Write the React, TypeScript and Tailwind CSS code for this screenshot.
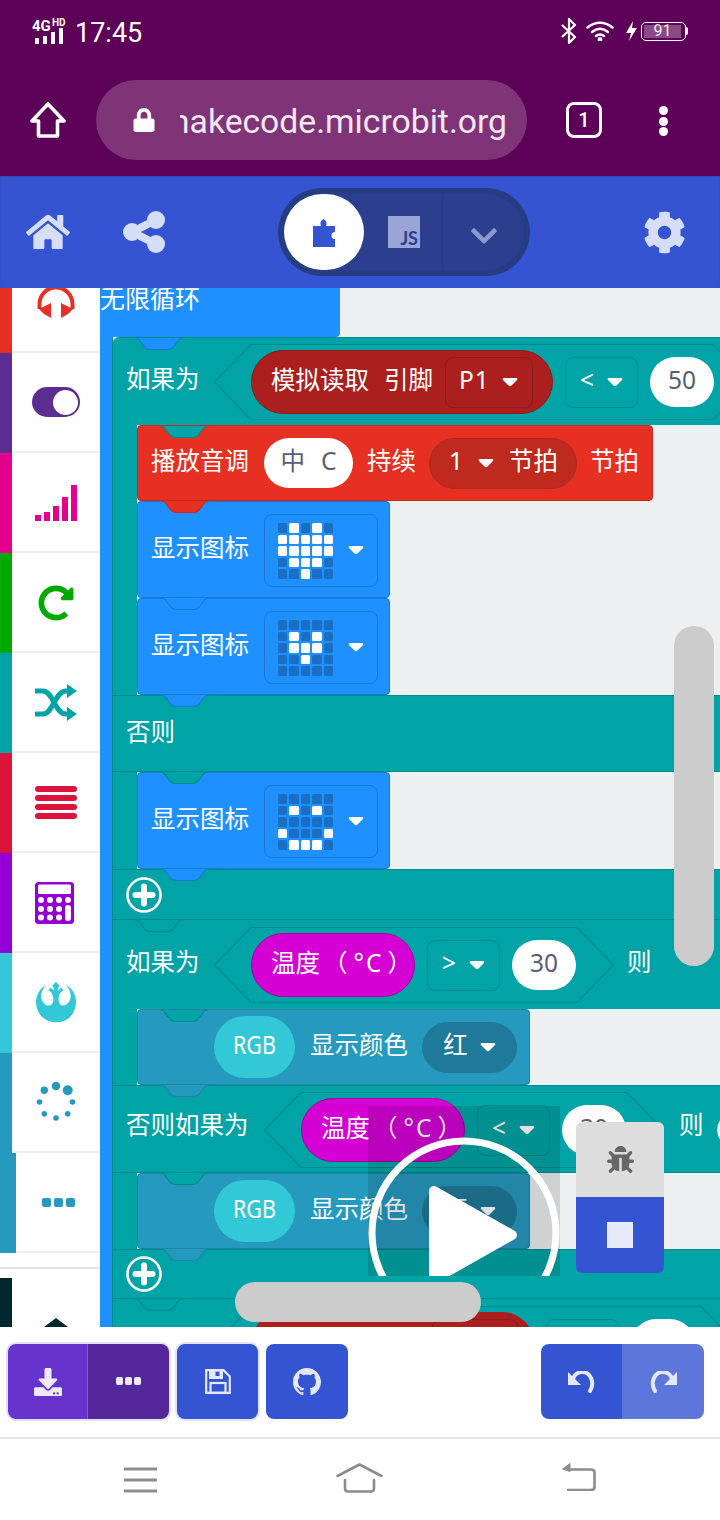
import type { ReactNode } from 'react';
import { FaBug, FaChevronDown, FaCog, FaDownload, FaHome, FaLock, FaRebel, FaRedoAlt } from 'react-icons/fa';
import { VscGithubInverted } from 'react-icons/vsc';

const FONT = '[font-family:"Noto_Sans","Noto_Sans_CJK_SC",sans-serif]';

function Bump({ fill, stroke }: { fill: string; stroke: string }) {
  return (
    <svg className="absolute left-[21px] top-full z-10" width="52" height="14" viewBox="0 0 52 14">
      <path d="M2 1 L3 1 Q5 1 6.5 3 L11 9 Q13.5 12.5 17 12.5 L35 12.5 Q38.5 12.5 41 9 L45.5 3 Q47 1 49 1 L50 1" fill={fill} stroke={stroke} strokeWidth="1.2" />
    </svg>
  );
}

// bump of a statement row, drawn over the first block inside it
function RowBump() {
  return (
    <div className="absolute left-[25px] top-full h-0 w-0">
      <Bump fill="#00a4a6" stroke="#008a8c" />
    </div>
  );
}

function Caret() {
  return (
    <svg width="16" height="10" viewBox="0 0 16 10" className="shrink-0">
      <path d="M2 1 L14 1 Q16 1 15 3 L9.5 8.5 Q8 10 6.5 8.5 L1 3 Q0 1 2 1 Z" fill="#fff" />
    </svg>
  );
}

function Hex({ width, children }: { width: number; children: ReactNode }) {
  const t = 37;
  const points = `${t},0.5 ${width - t},0.5 ${width - 0.5},38 ${width - t},75.5 ${t},75.5 0.5,38`;
  return (
    <div className="relative flex h-[76px] shrink-0 items-center pl-[37px]" style={{ width }}>
      <svg className="absolute inset-0" width={width} height="76">
        <polygon points={points} fill="#00a4a6" stroke="#008a8c" strokeWidth="1.2" />
      </svg>
      <div className="relative flex items-center">{children}</div>
    </div>
  );
}

function WhitePill({ children, width = 64 }: { children: ReactNode; width?: number }) {
  return (
    <div className="flex h-[50px] shrink-0 items-center justify-center rounded-full bg-white pb-[3px] text-[#575e75]" style={{ width }}>
      {children}
    </div>
  );
}

function CompareDrop({ label }: { label: string }) {
  return (
    <div className="mx-[12px] flex h-[51px] w-[73px] shrink-0 items-center justify-between rounded-lg border border-[#008a8c] px-[14px] text-white">
      <span className="-mt-[3px]">{label}</span>
      <Caret />
    </div>
  );
}

function TempPill() {
  return (
    <div className="flex h-[64px] w-[164px] shrink-0 items-center rounded-full border border-[#a3009e] bg-[#d400d4] pb-[3px] pl-[19px] text-white whitespace-pre">
      <span>温度</span>
      <span className="ml-[3px]">（</span>
      <span className="ml-[6px] tracking-[2px]">°C</span>
      <span className="ml-[4px]">）</span>
    </div>
  );
}

const LED_HEART = '.#.#.#####' + '#####.###...#..';
const LED_SMALL_HEART = '......#.#..###...#.......';
const LED_SMILE = '......#.#.....' + '.#...#.###.';

function ShowIcon({ leds }: { leds: string }) {
  return (
    <div className="relative flex h-[97px] w-[253px] items-center rounded border border-[#1a78d6] bg-[#1e90ff] pl-[13px] text-white">
      <span className="-mt-[2px] w-[113px]">显示图标</span>
      <div className="mt-[1px] flex h-[73px] w-[114px] items-center rounded-lg border border-[#1a78d6] pl-[13px]">
        <div className="mt-[2px] grid w-[55px] grid-cols-5 gap-[2px]">
          {leds.split('').map((c, i) => (
            <div key={i} className={c === '#' ? 'aspect-square rounded-[1.5px] bg-white' : 'aspect-square rounded-[1.5px] bg-[#1a6fc4]'} />
          ))}
        </div>
        <div className="ml-[15px]">
          <Caret />
        </div>
      </div>
      <Bump fill="#1e90ff" stroke="#1a78d6" />
    </div>
  );
}

function RgbBlock() {
  return (
    <div className="relative flex h-[76px] w-[393px] items-center rounded border border-[#1f84a6] bg-[#2699bf] pl-[76px] text-white">
      <div className="flex h-[62px] w-[81px] items-center justify-center rounded-full bg-[#33c8d6] pb-[3px]">
        <span className="scale-x-[0.88]">RGB</span>
      </div>
      <span className="-mt-[3px] ml-[15px] w-[112px]">显示颜色</span>
      <div className="flex h-[51px] w-[95px] items-center justify-center gap-[12px] rounded-full border border-[#1f7a99] bg-[#1f7a99]">
        <span className="-mt-[3px]">红</span>
        <Caret />
      </div>
      <Bump fill="#2699bf" stroke="#1f84a6" />
    </div>
  );
}

function PlusCircle() {
  return (
    <svg width="36" height="36" viewBox="0 0 36 36">
      <circle cx="18" cy="18" r="16.5" fill="none" stroke="#fff" strokeWidth="2.6" />
      <path d="M18 9.5 V26.5 M9.5 18 H26.5" stroke="#fff" strokeWidth="6" strokeLinecap="round" />
    </svg>
  );
}

function ToolItem({ strip, height = 'h-[100px]', wide, children }: { strip: string; height?: string; wide?: boolean; children: ReactNode }) {
  return (
    <div className={`flex ${height} w-full overflow-hidden`}>
      <div className={`${wide ? 'w-4' : 'w-3'} shrink-0 ${strip}`} />
      <div className={`flex flex-1 items-center border-b-2 border-[#eeeeee] bg-white ${wide ? 'pl-[26px]' : 'pl-[23px]'}`}>{children}</div>
    </div>
  );
}

function Toolbox() {
  const spinner = [
    [22, 6, 4.3],
    [33.7, 10.3, 5],
    [38.5, 22, 2.8],
    [33.7, 33.7, 2.8],
    [22, 38, 2.8],
    [10.3, 33.7, 2.8],
    [5.5, 22, 2.8],
    [10.3, 10.3, 3.7],
  ];
  return (
    <div className="flex w-[100px] shrink-0 flex-col bg-white">
      <ToolItem strip="bg-[#e63022]" height="h-[65px]">
        <svg width="38" height="33" viewBox="0 0 38 33" className="-mt-[36px] ml-[2px]">
          <path d="M2.5 24 V19 A16.5 16.5 0 0 1 35.5 19 V24" fill="none" stroke="#e63022" strokeWidth="4" />
          <path d="M2 24 L14 18 V33 L7 29 Z M36 24 L24 18 V33 L31 29 Z" fill="#e63022" />
        </svg>
      </ToolItem>
      <ToolItem strip="bg-[#5c2d91]">
        <div className="ml-[-3px] flex h-[30px] w-[48px] items-center justify-end rounded-full bg-[#5c2d91] pr-[2px]">
          <div className="h-[25px] w-[25px] rounded-full bg-white" />
        </div>
      </ToolItem>
      <ToolItem strip="bg-[#e3008c]">
        <svg width="42" height="36" viewBox="0 0 42 36" className="mt-[2px]">
          <path d="M0 30h6v6H0z M9 27h6v9H9z M18 21h6v15h-6z M27 12h6v24h-6z M36 0h6v36h-6z" fill="#e3008c" />
        </svg>
      </ToolItem>
      <ToolItem strip="bg-[#00a800]">
        <FaRedoAlt size={36} color="#00a800" className="ml-[3px] mt-[2px]" />
      </ToolItem>
      <ToolItem strip="bg-[#00a4a6]">
        <svg width="42" height="37" viewBox="0 0 42 37" fill="none" stroke="#00a4a6" strokeWidth="5">
          <path d="M0 7 H8 C18 7 20 30 31 30 H36" />
          <path d="M0 30 H8 C18 30 20 7 31 7 H36" />
          <path d="M32 0 L42 7 L32 14 Z M32 23 L42 30 L32 37 Z" fill="#00a4a6" stroke="none" />
        </svg>
      </ToolItem>
      <ToolItem strip="bg-[#dc143c]">
        <div className="flex w-[42px] flex-col gap-[3px]">
          <div className="h-[6px] rounded-sm bg-[#dc143c]" />
          <div className="h-[6px] rounded-sm bg-[#dc143c]" />
          <div className="h-[6px] rounded-sm bg-[#dc143c]" />
          <div className="h-[6px] rounded-sm bg-[#dc143c]" />
        </div>
      </ToolItem>
      <ToolItem strip="bg-[#9400d3]">
        <svg width="39" height="42" viewBox="0 0 39 42" className="mt-[2px]">
          <rect width="39" height="42" rx="3.5" fill="#9400d3" />
          <rect x="3" y="2.5" width="33" height="9.5" rx="1.5" fill="#fff" />
          {[6, 15, 24, 33].map((x) => (
            <circle key={x} cx={x} cy="18" r="3" fill="#fff" />
          ))}
          {[6, 15, 24].map((x) => (
            <circle key={x} cx={x} cy="27" r="3" fill="#fff" />
          ))}
          {[6, 15, 24].map((x) => (
            <circle key={x} cx={x} cy="35.5" r="3" fill="#fff" />
          ))}
          <rect x="30" y="23" width="6" height="16" rx="3" fill="#fff" />
        </svg>
      </ToolItem>
      <ToolItem strip="bg-[#33c8d6]">
        <FaRebel size={42} color="#33c8d6" />
      </ToolItem>
      <ToolItem strip="bg-[#2699bf]">
        <svg width="44" height="44" viewBox="0 0 44 44" className="-ml-[1px]">
          {spinner.map(([x, y, r]) => (
            <circle key={x * 10 + y} cx={x} cy={y} r={r} fill="#2699bf" />
          ))}
        </svg>
      </ToolItem>
      <ToolItem strip="bg-[#2699bf]" wide>
        <div className="flex gap-[3px]">
          <div className="h-[9px] w-[9px] rounded-[2px] bg-[#2699bf]" />
          <div className="h-[9px] w-[9px] rounded-[2px] bg-[#2699bf]" />
          <div className="h-[9px] w-[9px] rounded-[2px] bg-[#2699bf]" />
        </div>
      </ToolItem>
      <div className="mt-[14px] h-[2px] bg-[#e5e5e5]" />
      <div className="mt-[9px] flex h-[49px]">
        <div className="w-3 bg-[#00282d]" />
        <div className="relative flex-1 overflow-hidden">
          <svg className="absolute left-[32px] top-[40px]" width="24" height="9" viewBox="0 0 24 9">
            <path d="M12 0 L24 9 H0 Z" fill="#00282d" />
          </svg>
        </div>
      </div>
    </div>
  );
}

function Canvas() {
  return (
    <div className={`relative flex-1 overflow-hidden bg-[#ecf0f1] text-[24.5px] leading-none ${FONT}`}>
      <div className="h-[49px] w-[240px] rounded-br bg-[#1e90ff]">
        <div className="whitespace-nowrap text-[25px] leading-[20px] text-white">无限循环</div>
      </div>
      <div className="flex">
        <div className="w-3 shrink-0 bg-[#1e90ff]" />
        <div className="relative flex min-w-0 flex-1 flex-col text-white">
          <div className="absolute inset-y-0 left-0 z-10 w-px bg-[#008a8c]" />
          <div className="relative flex h-[88px] items-start rounded-tl-lg border-t border-[#008a8c] bg-[#00a4a6] pl-[14px] pt-[6px]">
            <span className="mt-[23px] w-[88px] shrink-0">如果为</span>
            <Hex width={536}>
              <div className="flex h-[64px] w-[302px] shrink-0 items-center rounded-full border border-[#8f1a1a] bg-[#ab1f1f] pl-[19px]">
                <span className="-mt-[3px]">模拟读取</span>
                <span className="-mt-[3px] ml-[15px] w-[61px] shrink-0">引脚</span>
                <div className="flex h-[51px] w-[88px] shrink-0 items-center justify-between rounded-lg border border-[#8f1a1a] pl-[13px] pr-[14px]">
                  <span className="-mt-[3px] tracking-[1px]">P1</span>
                  <Caret />
                </div>
              </div>
              <CompareDrop label="<" />
              <WhitePill>50</WhitePill>
            </Hex>
            <RowBump />
          </div>
          <div className="absolute left-0 top-0 h-0 w-0">
            <Bump fill="#1e90ff" stroke="#1a78d6" />
          </div>
          <div className="flex">
            <div className="w-[25px] shrink-0 bg-[#00a4a6]" />
            <div className="flex flex-col">
              <div className="relative flex h-[76px] w-[516px] items-center rounded border border-[#c9281c] bg-[#e63022] pl-[13px]">
                <span className="-mt-[3px] w-[113px] shrink-0">播放音调</span>
                <WhitePill width={89}>
                  <span>中</span>
                  <span className="ml-[16px]">C</span>
                </WhitePill>
                <span className="-mt-[3px] ml-[14px] w-[62px] shrink-0">持续</span>
                <div className="flex h-[51px] w-[148px] shrink-0 items-center rounded-full border border-[#b3271c] bg-[#bf2a1e] pl-[19px]">
                  <span className="-mt-[3px] w-[29px]">1</span>
                  <Caret />
                  <span className="-mt-[3px] ml-[15px]">节拍</span>
                </div>
                <span className="-mt-[3px] ml-[13px]">节拍</span>
                <Bump fill="#e63022" stroke="#c9281c" />
              </div>
              <ShowIcon leds={LED_HEART} />
              <ShowIcon leds={LED_SMALL_HEART} />
            </div>
          </div>
          <div className="relative flex h-[77px] items-center border-y border-[#008a8c] bg-[#00a4a6] pb-[2px] pl-[14px]">
            否则
            <RowBump />
          </div>
          <div className="relative flex">
            <div className="w-[25px] shrink-0 bg-[#00a4a6]" />
            <ShowIcon leds={LED_SMILE} />
          </div>
          <div className="relative flex h-[51px] items-center border-y border-[#008a8c] bg-[#00a4a6] pl-[14px]">
            <PlusCircle />
            <div className="absolute left-0 top-full h-0 w-0">
              <Bump fill="#00a4a6" stroke="#008a8c" />
            </div>
          </div>

          <div className="relative flex h-[89px] items-start bg-[#00a4a6] pl-[14px] pt-[7px]">
            <span className="mt-[23px] w-[88px] shrink-0">如果为</span>
            <Hex width={400}>
              <TempPill />
              <CompareDrop label=">" />
              <WhitePill>30</WhitePill>
            </Hex>
            <span className="ml-[13px] mt-[23px]">则</span>
            <RowBump />
          </div>
          <div className="relative flex">
            <div className="w-[25px] shrink-0 bg-[#00a4a6]" />
            <RgbBlock />
          </div>
          <div className="relative flex h-[88px] items-start border-y border-[#008a8c] bg-[#00a4a6] pl-[14px] pt-[6px]">
            <span className="mt-[21px] w-[138px] shrink-0">否则如果为</span>
            <Hex width={400}>
              <TempPill />
              <CompareDrop label="<" />
              <WhitePill>30</WhitePill>
            </Hex>
            <span className="ml-[15px] mt-[21px] shrink-0">则</span>
            <div className="ml-[13px] mt-[20px] shrink-0">
              <PlusCircle />
            </div>
            <RowBump />
          </div>
          <div className="relative flex">
            <div className="w-[25px] shrink-0 bg-[#00a4a6]" />
            <RgbBlock />
          </div>
          <div className="relative flex h-[50px] items-center border-y border-[#008a8c] bg-[#00a4a6] pl-[14px]">
            <PlusCircle />
            <div className="absolute left-0 top-full h-0 w-0">
              <Bump fill="#00a4a6" stroke="#008a8c" />
            </div>
          </div>

          <div className="relative flex h-[89px] items-start bg-[#00a4a6] pl-[14px] pt-[7px]">
            <span className="mt-[23px] w-[88px] shrink-0">如果为</span>
            <Hex width={524}>
              <div className="h-[64px] w-[283px] shrink-0 rounded-full bg-[#ab1f1f] pl-[181px] pt-[7px]">
                <div className="h-[51px] w-[86px] rounded-lg border border-[#8f1a1a]" />
              </div>
              <CompareDrop label="<" />
              <WhitePill>50</WhitePill>
            </Hex>
          </div>
        </div>
      </div>

      {/* simulator overlay */}
      <div className="absolute left-[268px] top-[818px] h-[170px] w-[192px] overflow-hidden bg-black/12">
        <svg width="192" height="170" viewBox="0 0 192 170">
          <circle cx="96" cy="127" r="92" fill="none" stroke="#fff" strokeWidth="7" />
          <path d="M66 85 L144 129 L66 173 Z" fill="#fff" stroke="#fff" strokeWidth="10" strokeLinejoin="round" />
        </svg>
      </div>
      <div className="absolute left-[476px] top-[834px] flex h-[151px] w-[88px] flex-col overflow-hidden rounded-md">
        <div className="flex h-[75px] items-center justify-center bg-[#dddddd]">
          <FaBug size={27} color="#666666" />
        </div>
        <div className="flex flex-1 items-center justify-center bg-[#3454d1]">
          <div className="h-[26px] w-[26px] bg-[#e8eafa]" />
        </div>
      </div>
      {/* scrollbars */}
      <div className="absolute left-[574px] top-[338px] h-[340px] w-[40px] rounded-full bg-[#cccccc]" />
      <div className="absolute left-[135px] top-[994px] h-[40px] w-[246px] rounded-full bg-[#cccccc]" />
    </div>
  );
}

function StatusBar() {
  return (
    <div className="flex h-[64px] items-start pl-[32px] pr-[32px] pt-[18px] text-white [font-family:Roboto,sans-serif]">
      <div className="relative h-[26px] w-[36px]">
        <span className="absolute left-0 top-[1px] text-[15px] font-bold leading-[14px]">4G</span>
        <span className="absolute left-[20px] top-0 text-[10px] font-bold leading-[10px]">HD</span>
        <svg className="absolute left-[3px] top-[10px]" width="28" height="16" viewBox="0 0 28 16">
          <path d="M0 10h4v6H0z M8 8h4v8H8z M16 4h4v12h-4z M24 0h4v16h-4z" fill="#fff" />
        </svg>
      </div>
      <span className="ml-[7px] text-[27px] leading-[30px]">17:45</span>
      <div className="ml-auto flex items-center">
        <svg width="16" height="26" viewBox="0 0 16 26" fill="none" stroke="#fff" strokeWidth="2.2" strokeLinejoin="round">
          <path d="M1 7 L14 19 L8 25 V1 L14 7 L1 19" />
        </svg>
        <svg className="ml-[9px]" width="28" height="20" viewBox="0 0 28 20" fill="none" stroke="#fff" strokeWidth="2.4" strokeLinecap="round">
          <path d="M1.5 6.5 Q14 -3 26.5 6.5" />
          <path d="M6 11 Q14 4.5 22 11" />
          <path d="M10 15 Q14 12 18 15" />
          <circle cx="14" cy="18.5" r="1.2" fill="#fff" />
        </svg>
        <svg className="ml-[12px]" width="11" height="20" viewBox="0 0 11 20">
          <path d="M7 0 L0 12 H5 L3 20 L11 7 H6 Z" fill="#fff" />
        </svg>
        <div className="ml-[4px] flex h-[19px] w-[45px] items-center rounded-[5px] border border-white p-[2px]">
          <div className="flex h-full w-[37px] items-center justify-center bg-[#8a4a86] text-[16px] leading-none text-[#f1e6f0]">91</div>
        </div>
        <div className="h-[8px] w-[2px] rounded-r bg-white" />
      </div>
    </div>
  );
}

function AddressBar() {
  return (
    <div className="flex h-[112px] items-start pl-[30px] pt-[16px]">
      <svg className="mt-[22px]" width="36" height="36" viewBox="0 0 36 36" fill="none" stroke="#fff" strokeWidth="3.6" strokeLinejoin="round">
        <path d="M18 2 L34 19 H27.5 V34 H8.5 V19 H2 Z" />
      </svg>
      <div className="ml-[30px] flex h-[80px] w-[431px] items-center rounded-full bg-[#7f3478] pl-[36px]">
        <FaLock size={24} color="#fff" />
        <div className="ml-[24px] mt-[5px] flex h-[46px] w-[327px] items-center justify-end overflow-hidden whitespace-nowrap text-[33.7px] text-[#f3e8f2] [font-family:Roboto,sans-serif]">makecode.microbit.org</div>
      </div>
      <div className="ml-[39px] mt-[22px] flex h-[36px] w-[36px] items-center justify-center rounded-lg border-[3.5px] border-white text-[20px] font-medium text-white [font-family:Roboto,sans-serif]">1</div>
      <div className="ml-[57px] mt-[26px] flex flex-col gap-[1.5px]">
        <div className="h-[9px] w-[9px] rounded-full bg-white" />
        <div className="h-[9px] w-[9px] rounded-full bg-white" />
        <div className="h-[9px] w-[9px] rounded-full bg-white" />
      </div>
    </div>
  );
}

function EditorHeader() {
  return (
    <div className="flex h-[112px] items-center bg-[#3454d1] pl-[26px] pr-[34px] shadow-[inset_0_1px_2px_rgba(0,0,0,0.1)]">
      <FaHome size={44} color="#d6ddf6" />
      <svg width="42" height="42" viewBox="0 0 42 42" className="ml-[53px]">
        <path d="M9 21 L33 9 M9 21 L33 33" stroke="#d6ddf6" strokeWidth="8" />
        <circle cx="9" cy="21" r="9" fill="#d6ddf6" />
        <circle cx="33" cy="9" r="9" fill="#d6ddf6" />
        <circle cx="33" cy="33" r="9" fill="#d6ddf6" />
      </svg>
      <div className="ml-[113px] h-[88px] w-[252px] rounded-full bg-[#263c85] p-[6px]">
        <div className="flex h-full rounded-full bg-[#2b3f8e]">
          <div className="flex w-[80px] items-center justify-center rounded-full bg-white">
            <svg width="22" height="28" viewBox="0 0 22 28" className="mt-[2px]">
              <path d="M0 7 H8 Q6 3 10.5 0 Q15 3 13 7 H22 V13 A3.5 3.5 0 0 0 22 20 V28 H0 Z" fill="#3454d1" />
            </svg>
          </div>
          <div className="flex w-[78px] items-center justify-end pr-[22px]">
            <div className="flex h-[32px] w-[32px] items-end justify-end bg-[#98a5d6] pr-[2px] text-[18px] font-bold leading-[20px] text-[#2b3f8e] [font-family:Lato,sans-serif]">JS</div>
          </div>
          <div className="flex flex-1 items-center justify-center border-l border-[#263c85] pt-[8px]">
            <FaChevronDown size={30} color="#8b9bd0" />
          </div>
        </div>
      </div>
      <FaCog size={43} color="#d6ddf6" className="ml-auto" />
    </div>
  );
}

function Toolbar() {
  return (
    <div className="flex h-[110px] items-start justify-between bg-white pl-[8px] pr-[16px] pt-[17px]">
      <div className="flex gap-[8px]">
        <div className="flex h-[75px] w-[161px] overflow-hidden rounded-lg ring-2 ring-[#e4e0f4]">
          <div className="flex w-[80px] items-center justify-center border-r border-[#7a68b5] bg-[#6633cc]">
            <FaDownload size={28} color="#efe9fb" />
          </div>
          <div className="flex flex-1 items-center justify-center bg-[#52289b]">
            <div className="-mt-[2px] flex gap-[2px]">
              <div className="h-[8px] w-[7px] rounded-[2px] bg-[#efe9fb]" />
              <div className="h-[8px] w-[7px] rounded-[2px] bg-[#efe9fb]" />
              <div className="h-[8px] w-[7px] rounded-[2px] bg-[#efe9fb]" />
            </div>
          </div>
        </div>
        <div className="flex h-[75px] w-[81px] items-center justify-center rounded-lg bg-[#3454d1] ring-2 ring-[#dfe3f6]">
          <svg width="26" height="25" viewBox="0 0 26 25" fill="none" stroke="#e4e8fa" strokeWidth="2.2">
            <path d="M1.2 1.2 H18.5 L24.8 7.5 V23.8 H1.2 Z" />
            <rect x="5.5" y="14" width="15" height="9.8" />
            <path d="M4 1 H18 V10 H4 Z M10.5 2.5 V7 H14.5 V2.5 Z" fill="#e4e8fa" stroke="none" fillRule="evenodd" />
          </svg>
        </div>
        <div className="flex h-[75px] w-[82px] items-center justify-center rounded-lg bg-[#3454d1]">
          <VscGithubInverted size={28} color="#e4e8fa" />
        </div>
      </div>
      <div className="flex h-[75px] w-[163px] overflow-hidden rounded-lg">
        <div className="flex w-[81px] items-center justify-center bg-[#3454d1]">
          <svg width="28" height="22" viewBox="0 0 28 22" fill="none">
            <path d="M5 8 A9.5 9.5 0 0 1 23 7 Q26 13 22 20" stroke="#e4e8fa" strokeWidth="4" strokeLinecap="round" />
            <path d="M0 1 V14 H13 Z" fill="#e4e8fa" />
          </svg>
        </div>
        <div className="flex flex-1 items-center justify-center bg-[#5d76dc]">
          <svg width="28" height="22" viewBox="0 0 28 22" fill="none">
            <path d="M23 8 A9.5 9.5 0 0 0 5 7 Q2 13 6 20" stroke="#e4e8fa" strokeWidth="4" strokeLinecap="round" />
            <path d="M28 1 V14 H15 Z" fill="#e4e8fa" />
          </svg>
        </div>
      </div>
    </div>
  );
}

function NavBar() {
  return (
    <div className="flex h-[83px] items-start justify-between border-t-2 border-[#e5e5e5] bg-white px-[124px] pt-[24px]">
      <svg width="33" height="26" viewBox="0 0 33 26" stroke="#8c8c8c" strokeWidth="3" className="mt-[4px]">
        <path d="M0 2 H33 M0 13 H33 M0 24 H33" />
      </svg>
      <svg width="47" height="30" viewBox="0 0 47 30" fill="none" stroke="#8c8c8c" strokeWidth="2.6" strokeLinecap="round" strokeLinejoin="round">
        <path d="M1.5 13 L23.5 1.5 L45.5 13" />
        <path d="M9 17 V25.5 Q9 28.5 12 28.5 H35 Q38 28.5 38 25.5 V17" />
      </svg>
      <svg width="34" height="28" viewBox="0 0 34 28" fill="none" stroke="#8c8c8c" strokeWidth="2.6" strokeLinejoin="round">
        <path d="M6 6.5 H29 Q32.5 6.5 32.5 9.5 V24 Q32.5 27 29 27 H5" />
        <path d="M8 0.5 L0.5 6 L8 8.5 Z" fill="#8c8c8c" strokeWidth="1" />
      </svg>
    </div>
  );
}

export default function App() {
  return (
    <div className="flex h-[1520px] w-[720px] flex-col overflow-hidden bg-white">
      <div className="h-[176px] bg-[#5c0058]">
        <StatusBar />
        <AddressBar />
      </div>
      <EditorHeader />
      <div className="flex h-[1039px]">
        <Toolbox />
        <Canvas />
      </div>
      <Toolbar />
      <NavBar />
    </div>
  );
}
